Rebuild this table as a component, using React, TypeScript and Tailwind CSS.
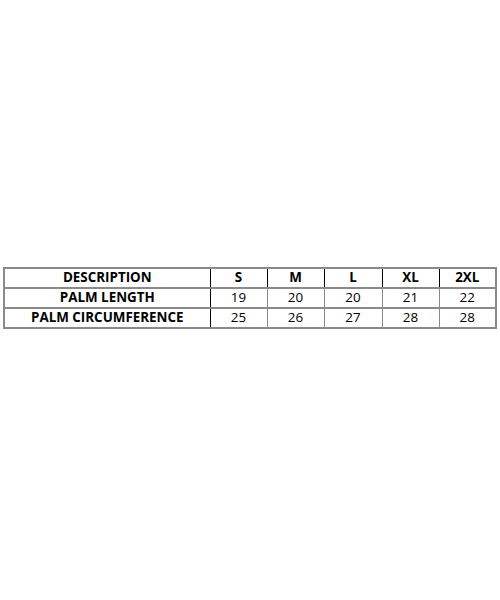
const sizes = ["S", "M", "L", "XL", "2XL"];
const rows = [
  { label: "PALM LENGTH", values: ["19", "20", "20", "21", "22"] },
  { label: "PALM CIRCUMFERENCE", values: ["25", "26", "27", "28", "28"] },
];

export default function App() {
  return (
    <div className="h-[600px] bg-white pt-[267px] pl-[3px] font-['Open_Sans',sans-serif] text-[13.4px] text-black">
      <table className="w-[492px] table-fixed border-collapse border-2 border-[#8a8a8a]">
        <colgroup>
          <col className="w-[206px]" />
          <col className="w-[57px]" />
          <col className="w-[57px]" />
          <col className="w-[58px]" />
          <col className="w-[57px]" />
          <col className="w-[57px]" />
        </colgroup>
        <thead>
          <tr className="h-[20px] border-b-2 border-[#8a8a8a]">
            <th className="border-r border-black p-0 font-bold leading-none">DESCRIPTION</th>
            {sizes.map((s) => (
              <th key={s} className="border-r border-black p-0 font-bold leading-none last:border-r-0">
                {s}
              </th>
            ))}
          </tr>
        </thead>
        <tbody>
          {rows.map((r) => (
            <tr key={r.label} className="h-[20px] border-b-2 border-[#8a8a8a] last:border-b-0">
              <td className="border-r border-black p-0 text-center font-bold leading-none">{r.label}</td>
              {r.values.map((v, i) => (
                <td key={i} className="border-r border-[#8a8a8a] p-0 text-center leading-none last:border-r-0">
                  {v}
                </td>
              ))}
            </tr>
          ))}
        </tbody>
      </table>
    </div>
  );
}
